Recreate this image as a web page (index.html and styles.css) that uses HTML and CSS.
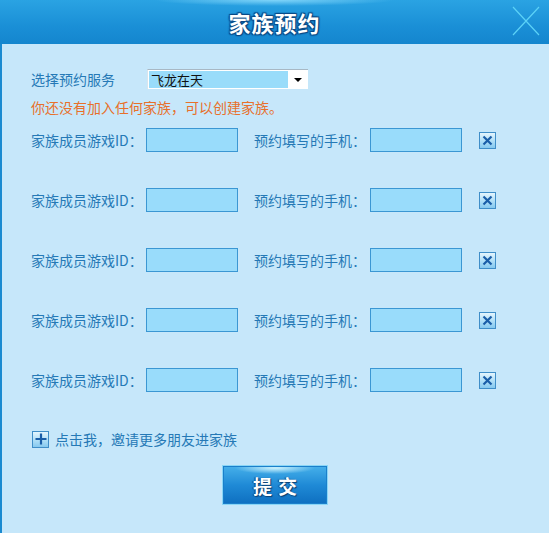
FILE: index.html
```html
<!DOCTYPE html>
<html lang="zh-CN">
<head>
  <meta charset="UTF-8" />
  <meta name="viewport" content="width=device-width,initial-scale=1" />
  <title>家族预约</title>
  <link rel="stylesheet" href="styles.css">
</head>
<body>
  <div class="dialog">

    <!-- 标题栏 -->
    <div class="dialog-head">
      <h1 class="dialog-title">家族预约</h1>
      <a class="dialog-close" href="#" title="关闭">
        <svg width="28" height="30" viewBox="0 0 28 30">
          <path d="M1 1 L27 29 M27 1 L1 29" stroke="#5cd2f7" stroke-width="1.2" fill="none"/>
        </svg>
      </a>
    </div>

    <!-- 表单 -->
    <div class="dialog-body">
      <div class="row service-row">
        <span class="label">选择预约服务</span>
        <div class="fake-select">
          <span class="fake-select-value">飞龙在天</span>
          <span class="fake-select-arrow"></span>
        </div>
      </div>

      <p class="notice">你还没有加入任何家族，可以创建家族。</p>

      <div class="members">
        <div class="row member-row">
          <span class="label">家族成员游戏ID：</span>
          <input type="text" class="field">
          <span class="label label-phone">预约填写的手机：</span>
          <input type="text" class="field">
          <a href="#" class="btn-del"><svg width="11" height="11" viewBox="0 0 11 11"><path d="M1.5 1.5 L9.5 9.5 M9.5 1.5 L1.5 9.5" stroke="#1a5ea8" stroke-width="2.2"/></svg></a>
        </div>
        <div class="row member-row">
          <span class="label">家族成员游戏ID：</span>
          <input type="text" class="field">
          <span class="label label-phone">预约填写的手机：</span>
          <input type="text" class="field">
          <a href="#" class="btn-del"><svg width="11" height="11" viewBox="0 0 11 11"><path d="M1.5 1.5 L9.5 9.5 M9.5 1.5 L1.5 9.5" stroke="#1a5ea8" stroke-width="2.2"/></svg></a>
        </div>
        <div class="row member-row">
          <span class="label">家族成员游戏ID：</span>
          <input type="text" class="field">
          <span class="label label-phone">预约填写的手机：</span>
          <input type="text" class="field">
          <a href="#" class="btn-del"><svg width="11" height="11" viewBox="0 0 11 11"><path d="M1.5 1.5 L9.5 9.5 M9.5 1.5 L1.5 9.5" stroke="#1a5ea8" stroke-width="2.2"/></svg></a>
        </div>
        <div class="row member-row">
          <span class="label">家族成员游戏ID：</span>
          <input type="text" class="field">
          <span class="label label-phone">预约填写的手机：</span>
          <input type="text" class="field">
          <a href="#" class="btn-del"><svg width="11" height="11" viewBox="0 0 11 11"><path d="M1.5 1.5 L9.5 9.5 M9.5 1.5 L1.5 9.5" stroke="#1a5ea8" stroke-width="2.2"/></svg></a>
        </div>
        <div class="row member-row">
          <span class="label">家族成员游戏ID：</span>
          <input type="text" class="field">
          <span class="label label-phone">预约填写的手机：</span>
          <input type="text" class="field">
          <a href="#" class="btn-del"><svg width="11" height="11" viewBox="0 0 11 11"><path d="M1.5 1.5 L9.5 9.5 M9.5 1.5 L1.5 9.5" stroke="#1a5ea8" stroke-width="2.2"/></svg></a>
        </div>
      </div>

      <a href="#" class="row invite">
        <span class="btn-add"><svg width="12" height="12" viewBox="0 0 12 12"><path d="M6 0.5 V11.5 M0.5 6 H11.5" stroke="#1a5ea8" stroke-width="2.2"/></svg></span>
        <span class="invite-text">点击我，邀请更多朋友进家族</span>
      </a>

      <div class="submit-wrap">
        <button class="btn-submit">提交</button>
      </div>
    </div>

  </div>
</body>
</html>
```

FILE: styles.css
```css
html, body { margin: 0; padding: 0; }
body {
  font-family: "Noto Sans CJK SC", "DejaVu Sans", sans-serif;
  font-size: 14px;
  background: #c6e7fa;
}

.dialog { width: 549px; height: 533px; background: #c6e7fa; overflow: hidden; }

/* header */
.dialog-head {
  height: 44px;
  display: flex;
  align-items: center;
  justify-content: center;
  position: relative;
  background:
    radial-gradient(ellipse 120px 6px at 50% 0, rgba(150,225,255,.8), rgba(150,225,255,0)),
    linear-gradient(#2aa3e3, #1a8fd6 60%, #1486ce);
}
.dialog-title {
  margin: 0;
  font-size: 22px;
  font-weight: bold;
  color: #fff;
  letter-spacing: 1px;
  line-height: 44px;
  text-shadow: 0 0 2px #0b4a86, 1px 1px 1px #0b4a86, -1px -1px 1px #0b4a86, 1px -1px 1px #0b4a86, -1px 1px 1px #0b4a86;
}
.dialog-close { position: absolute; right: 9px; top: 6px; width: 28px; height: 30px; display: block; }
.dialog-close svg { display: block; }

/* body */
.dialog-body {
  height: 489px;
  border-left: 2px solid #1a8ad0;
  padding: 25px 0 0 29px;
  box-sizing: border-box;
}
.row { display: flex; align-items: center; }
.label { color: #2579b6; white-space: nowrap; }

.service-row { height: 20px; }
.service-row .label { width: 116px; }
.fake-select {
  width: 161px;
  height: 20px;
  box-sizing: border-box;
  background: #fff;
  border-top: 1px solid #a8b8c4;
  border-left: 1px solid #d8e4ec;
  display: flex;
  align-items: center;
  padding: 1px 2px 1px 1px;
}
.fake-select-value {
  flex: 1;
  height: 17px;
  line-height: 17px;
  background: #99dcfa;
  color: #111;
  font-size: 13px;
  padding-left: 2px;
}
.fake-select-arrow {
  width: 18px;
  height: 17px;
  position: relative;
}
.fake-select-arrow::after {
  content: "";
  position: absolute;
  left: 6px; top: 7px;
  border-left: 4px solid transparent;
  border-right: 4px solid transparent;
  border-top: 4px solid #000;
}

.notice { margin: 8px 0 0; height: 20px; line-height: 20px; color: #e8702a; }

.members { margin-top: 11px; display: flex; flex-direction: column; gap: 36px; }
.member-row { height: 24px; }
.member-row .label { width: 115px; }
.member-row .label-phone { width: 116px; margin-left: 16px; }
.field {
  width: 92px;
  height: 24px;
  box-sizing: border-box;
  border: 1px solid #3b97d3;
  background: #99dcfb;
  margin: 0;
  padding: 0 3px;
  outline: none;
}
.btn-del, .btn-add {
  display: flex;
  align-items: center;
  justify-content: center;
  box-sizing: border-box;
  border: 1px solid #3f8ec8;
  background: linear-gradient(#e4f5fd, #a9dcf6 60%, #86c9ef);
}
.btn-del { width: 17px; height: 17px; margin-left: 17px; }

.invite { margin-top: 38px; height: 18px; text-decoration: none; }
.btn-add { width: 17px; height: 17px; margin-left: 1px; }
.invite-text { color: #2579b6; margin-left: 6px; }

.submit-wrap { display: flex; justify-content: center; margin-top: 17px; padding-right: 30px; }
.btn-submit {
  width: 106px;
  height: 40px;
  border: 1px solid #8ad6f6;
  box-shadow: inset 0 0 0 1px #1b7fcb;
  background:
    radial-gradient(ellipse 40px 6px at 50% 2px, rgba(220,250,255,.9), rgba(220,250,255,0)),
    linear-gradient(#46b0ea, #1f8ad6 50%, #0e6fc0);
  color: #fff;
  font-family: "Noto Sans CJK SC", sans-serif;
  font-size: 19px;
  font-weight: bold;
  letter-spacing: 6px;
  padding: 0 0 0 6px;
  text-shadow: 1px 1px 1px #0a3f72, -1px 0 1px #0a3f72;
  cursor: pointer;
}
```
